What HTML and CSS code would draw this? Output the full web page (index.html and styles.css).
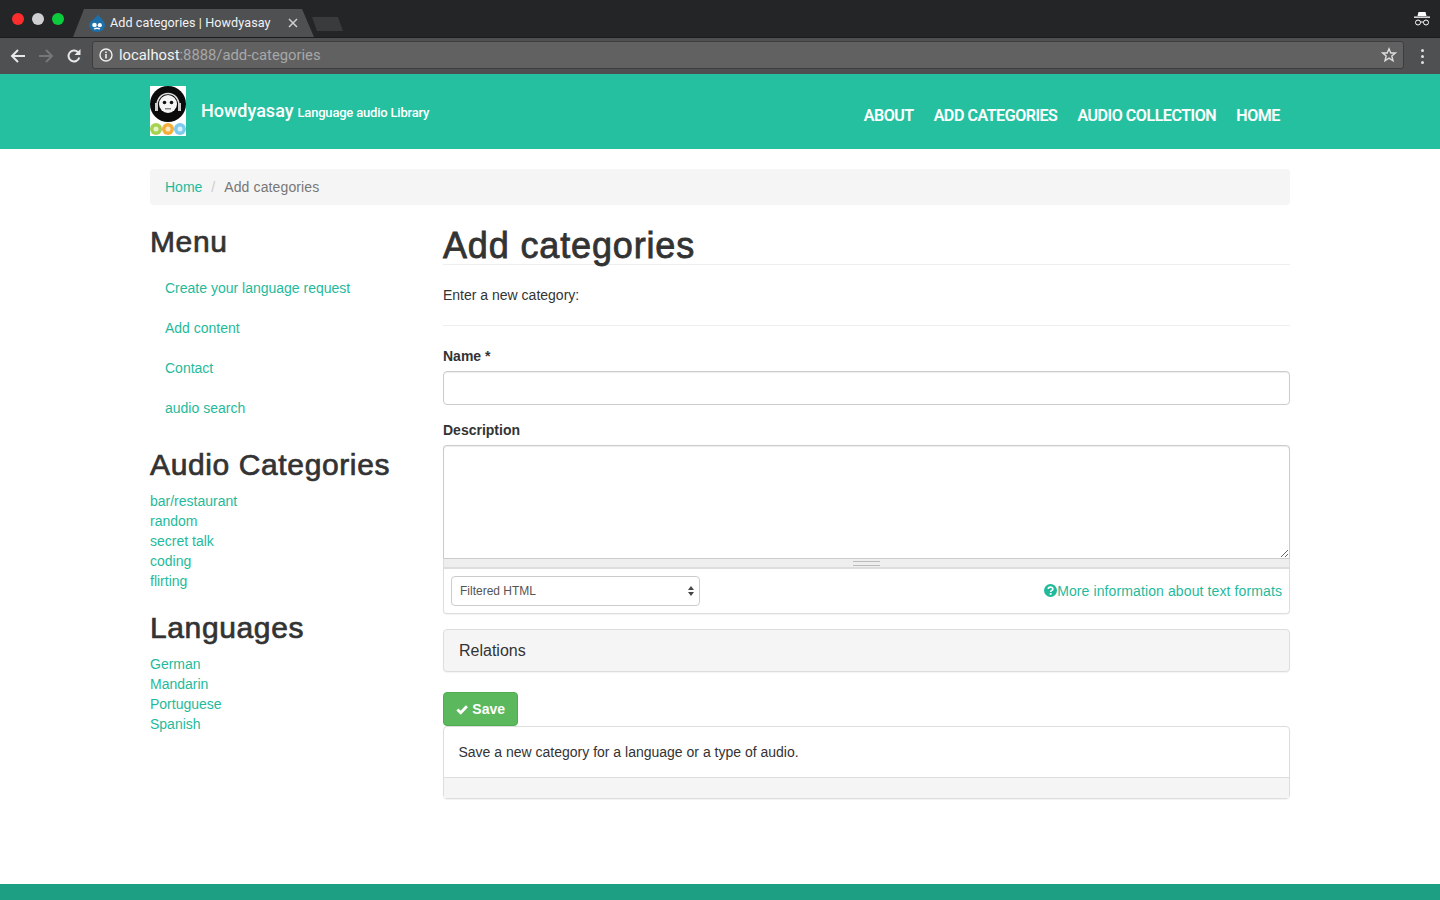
FILE: index.html
```html
<!DOCTYPE html>
<html lang="en">

<head>
    <meta charset="UTF-8">
    <title>Add categories | Howdyasay</title>
    <link rel="stylesheet" href="styles.css">
</head>

<body>
    <!-- browser chrome -->
    <div class="tabstrip">
        <div class="lights">
            <span class="light red"></span>
            <span class="light grey"></span>
            <span class="light green"></span>
        </div>
        <div class="tab">
            <svg class="favicon" width="16" height="18" viewBox="0 0 16 18">
                <path d="M9 0C9.500 3 15.500 5.500 16 11C16 15 12.500 18 8 18C3.500 18 0 15 0 11C0.500 6.500 8 4 9 0Z" fill="#1d6fa8"/>
                <circle cx="5.500" cy="11" r="2.300" fill="#fff"/>
                <circle cx="10.800" cy="11.200" r="2.100" fill="#fff"/>
                <path d="M5 15C7 14 9 14 11 15" stroke="#fff" stroke-width="1.300" fill="none"/>
            </svg>
            <span class="tab-title">Add categories | Howdyasay</span>
            <svg class="tab-close" width="10" height="10" viewBox="0 0 10 10">
                <path d="M1 1L9 9M9 1L1 9" stroke="#d0d0d0" stroke-width="1.500"/>
            </svg>
        </div>
        <div class="newtab"></div>
        <svg class="incognito" width="18" height="18" viewBox="0 0 18 18">
            <path d="M5.500 2H12.500L13.500 6H4.500Z" fill="#fff"/>
            <rect x="1" y="6.500" width="16" height="1.300" fill="#fff"/>
            <circle cx="5" cy="12.500" r="2.500" fill="none" stroke="#fff" stroke-width="1"/>
            <circle cx="13" cy="12.500" r="2.500" fill="none" stroke="#fff" stroke-width="1"/>
            <path d="M7.500 12H10.500" stroke="#fff" stroke-width="1"/>
        </svg>
    </div>
    <div class="toolbar">
        <svg class="tool" width="16" height="16" viewBox="0 0 16 16">
            <path d="M15 8H2M8 2L2 8L8 14" fill="none" stroke="#e8e8e8" stroke-width="2"/>
        </svg>
        <svg class="tool" width="16" height="16" viewBox="0 0 16 16">
            <path d="M1 8H14M8 2L14 8L8 14" fill="none" stroke="#777" stroke-width="2"/>
        </svg>
        <svg class="tool" width="16" height="16" viewBox="0 0 16 16">
            <path d="M13.300 9.500A5.500 5.500 0 1 1 12 4.200" fill="none" stroke="#e8e8e8" stroke-width="2"/>
            <path d="M14.500 1V7H8.500Z" fill="#e8e8e8"/>
        </svg>
        <div class="omnibox">
            <svg width="14" height="14" viewBox="0 0 14 14">
                <circle cx="7" cy="7" r="6" fill="none" stroke="#f0f0f0" stroke-width="1.400"/>
                <rect x="6.200" y="6" width="1.600" height="4.500" fill="#f0f0f0"/>
                <rect x="6.200" y="3.500" width="1.600" height="1.600" fill="#f0f0f0"/>
            </svg>
            <span class="url"><span class="host">localhost</span>:8888/add-categories</span>
            <svg class="star" width="16" height="16" viewBox="0 0 16 16">
                <path d="M8 1.800L9.800 6H14.400L10.800 9L12 13.800L8 11.200L4 13.800L5.200 9L1.600 6H6.200Z" fill="none" stroke="#ddd" stroke-width="1.400"/>
            </svg>
        </div>
        <div class="kebab"><i></i><i></i><i></i></div>
    </div>

    <!-- site -->
    <header class="navbar">
        <div class="container navbar-inner">
            <a class="brand" href="#">
                <svg class="logo" width="36" height="50" viewBox="0 0 36 50">
                    <rect width="36" height="50" fill="#fff"/>
                    <circle cx="18" cy="18" r="18" fill="#0a0a0a"/>
                    <path d="M7 21C6 3 30 3 29 21" fill="none" stroke="#ddd" stroke-width="1.500"/>
                    <rect x="5" y="17" width="3" height="8" fill="#ccc"/>
                    <rect x="28" y="17" width="3" height="8" fill="#ccc"/>
                    <circle cx="18" cy="18" r="9" fill="#f4f4f4"/>
                    <circle cx="14.500" cy="16.500" r="1.800" fill="#111"/>
                    <circle cx="21.500" cy="16.500" r="1.800" fill="#111"/>
                    <rect x="15" y="22" width="6" height="1.500" fill="#888"/>
                    <circle cx="6" cy="43" r="6" fill="#a5d24f"/>
                    <circle cx="18" cy="43" r="6" fill="#f6ae3b"/>
                    <circle cx="30" cy="43" r="6" fill="#7ecbee"/>
                    <circle cx="6" cy="43" r="2.500" fill="#e6f2c8"/>
                    <circle cx="18" cy="43" r="2.500" fill="#fde9c4"/>
                    <circle cx="30" cy="43" r="2.500" fill="#d8f0fa"/>
                </svg>
                <span class="brand-name">Howdyasay</span>
                <span class="brand-slogan">Language audio Library</span>
            </a>
            <nav class="nav">
                <a href="#">ABOUT</a>
                <a href="#">ADD CATEGORIES</a>
                <a href="#">AUDIO COLLECTION</a>
                <a href="#">HOME</a>
            </nav>
        </div>
    </header>

    <div class="container">
        <ol class="breadcrumb">
            <li><a href="#">Home</a></li>
            <li class="sep">/</li>
            <li class="current">Add categories</li>
        </ol>

        <div class="columns">
            <aside class="sidebar">
                <h2 class="menu-title">Menu</h2>
                <ul class="menu">
                    <li><a href="#">Create your language request</a></li>
                    <li><a href="#">Add content</a></li>
                    <li><a href="#">Contact</a></li>
                    <li><a href="#">audio search</a></li>
                </ul>
                <h2 class="block-title">Audio Categories</h2>
                <ul class="list">
                    <li><a href="#">bar/restaurant</a></li>
                    <li><a href="#">random</a></li>
                    <li><a href="#">secret talk</a></li>
                    <li><a href="#">coding</a></li>
                    <li><a href="#">flirting</a></li>
                </ul>
                <h2 class="block-title">Languages</h2>
                <ul class="list">
                    <li><a href="#">German</a></li>
                    <li><a href="#">Mandarin</a></li>
                    <li><a href="#">Portuguese</a></li>
                    <li><a href="#">Spanish</a></li>
                </ul>
            </aside>

            <main class="content">
                <h1 class="page-title">Add categories</h1>
                <p class="intro">Enter a new category:</p>

                <form>
                    <label class="field-label" for="name">Name *</label>
                    <input class="form-control" type="text" id="name">

                    <label class="field-label" for="description">Description</label>
                    <div class="format-box">
                        <textarea class="text-area" id="description"></textarea>
                        <div class="grippie"><span></span></div>
                        <div class="format-row">
                            <div class="fake-select">
                                <span>Filtered HTML</span>
                                <svg width="6" height="10" viewBox="0 0 6 10">
                                    <path d="M3 0L6 4H0Z M3 10L0 6H6Z" fill="#444"/>
                                </svg>
                            </div>
                            <a class="format-help" href="#">
                                <svg width="13" height="13" viewBox="0 0 12 12">
                                    <circle cx="6" cy="6" r="6" fill="#1fba9b"/>
                                    <path d="M3.900 4.600C4 2.400 8.200 2.300 8.200 4.500C8.200 6 6.200 5.900 6.200 7.300" fill="none" stroke="#fff" stroke-width="1.500"/>
                                    <rect x="5.300" y="8.300" width="1.700" height="1.700" fill="#fff"/>
                                </svg>More information about text formats
                            </a>
                        </div>
                    </div>

                    <div class="relations">Relations</div>

                    <button class="btn-save" type="button">
                        <svg width="14" height="11" viewBox="0 0 13 11">
                            <path d="M1.500 5.500L5 9L11.500 2" fill="none" stroke="#fff" stroke-width="3"/>
                        </svg>
                        Save
                    </button>

                    <div class="help-panel">
                        <div class="help-body">Save a new category for a language or a type of audio.</div>
                        <div class="help-foot"></div>
                    </div>
                </form>
            </main>
        </div>
    </div>

    <footer class="footer"></footer>
</body>

</html>
```

FILE: styles.css
```css
* {
    box-sizing: border-box;
}

body {
    margin: 0;
    height: 900px;
    overflow: hidden;
    display: flex;
    flex-direction: column;
    font-family: "Liberation Sans", Arial, sans-serif;
    font-size: 14px;
    line-height: 20px;
    color: #333;
    background-color: #fff;
}

a {
    color: #1fba9b;
    text-decoration: none;
}

ul,
ol {
    list-style: none;
    margin: 0;
    padding: 0;
}

/* browser chrome */
.tabstrip {
    height: 37px;
    flex: none;
    display: flex;
    align-items: flex-end;
    background-color: #242527;
    padding-left: 12px;
    position: relative;
}

.lights {
    display: flex;
    gap: 8px;
    align-self: flex-start;
    margin-top: 13px;
    margin-right: 6px;
}

.light {
    width: 12px;
    height: 12px;
    border-radius: 50%;
}

.red {
    background-color: #fc2d2d;
}

.grey {
    background-color: #d0d0d0;
}

.green {
    background-color: #0ccc3e;
}

.tab {
    width: 241px;
    height: 28px;
    margin-left: 3px;
    padding: 0 8px 0 16px;
    display: flex;
    align-items: center;
    color: #f2f2f2;
    font-family: Roboto, sans-serif;
    font-size: 12.600px;
    letter-spacing: 0.080px;
    background-color: #4f5052;
    clip-path: polygon(0 100%, 11px 0, 229px 0, 100% 100%);
}

.favicon {
    flex: none;
    margin-right: 5px;
}

.tab-title {
    flex: 1;
    white-space: nowrap;
}

.tab-close {
    margin-right: 8px;
}

.newtab {
    width: 31px;
    height: 14px;
    margin: 0 0 6px -2px;
    background-color: #3a3b3d;
    clip-path: polygon(0 0, 26px 0, 100% 100%, 5px 100%);
}

.incognito {
    position: absolute;
    right: 9px;
    top: 10px;
}

.toolbar {
    height: 37px;
    flex: none;
    display: flex;
    align-items: center;
    gap: 12px;
    padding: 0 10px;
    background-color: #4f5052;
    border-top: 1px solid #1c1c1c;
}

.tool {
    flex: none;
}

.omnibox {
    flex: 1;
    height: 28px;
    margin: -2px -2px 0 -2px;
    padding: 0 6px;
    display: flex;
    align-items: center;
    gap: 6px;
    background-color: #616161;
    border: 1px solid #3d3d3d;
    border-radius: 3px;
    font-family: Roboto, sans-serif;
    font-size: 14.800px;
    color: #a8a8a8;
}

.url {
    flex: 1;
}

.host {
    color: #f2f2f2;
}

.kebab {
    width: 16px;
    display: flex;
    flex-direction: column;
    align-items: center;
    gap: 3px;
}

.kebab i {
    width: 3px;
    height: 3px;
    border-radius: 50%;
    background-color: #e0e0e0;
}

/* site */
.container {
    width: 1140px;
    margin-left: auto;
    margin-right: auto;
}

.navbar {
    height: 75px;
    flex: none;
    background-color: #25c0a0;
}

.navbar-inner {
    height: 100%;
    display: flex;
    justify-content: space-between;
}

.brand {
    display: flex;
    align-items: center;
    padding-bottom: 1px;
    color: #fff;
    font-family: Roboto, sans-serif;
    font-weight: 500;
}

.logo {
    margin-right: 15px;
}

.brand-name {
    font-size: 18px;
    margin-right: 4px;
    margin-bottom: 1px;
}

.brand-slogan {
    font-size: 13px;
    letter-spacing: -0.200px;
    margin-top: 3px;
}

.nav {
    display: flex;
    align-items: center;
    gap: 20px;
    padding: 9px 10px 0 0;
}

.nav a {
    color: #fff;
    font-family: Roboto, sans-serif;
    font-size: 16px;
    font-weight: 500;
    letter-spacing: -0.420px;
    -webkit-text-stroke: 0.200px #fff;
}

.breadcrumb {
    display: flex;
    gap: 9px;
    height: 36px;
    margin-top: 20px;
    padding: 8px 15px;
    background-color: #f5f5f5;
    border-radius: 4px;
}

.sep {
    color: #ccc;
}

.current {
    color: #777;
    letter-spacing: 0.120px;
}

.columns {
    display: flex;
    margin-top: 20px;
}

.sidebar {
    width: 293px;
    flex: none;
}

.menu-title,
.block-title {
    margin: 0;
    font-size: 30px;
    line-height: 33px;
    font-weight: 500;
    color: #333;
    letter-spacing: 0.620px;
    -webkit-text-stroke: 0.700px #333;
}

.menu {
    margin-top: 10px;
}

.menu li {
    height: 40px;
    padding: 10px 15px;
}

.block-title {
    margin-top: 20px;
    margin-bottom: 10px;
}

.content {
    flex: 1;
    padding-top: 1px;
}

.page-title {
    margin: 0;
    height: 39px;
    font-size: 36px;
    line-height: 39px;
    font-weight: 500;
    letter-spacing: 0.850px;
    -webkit-text-stroke: 0.800px #333;
    border-bottom: 1px solid #eee;
}

.intro {
    margin: 0;
    padding: 20px 0;
    height: 61px;
    border-bottom: 1px solid #eee;
}

.field-label {
    display: block;
    margin-top: 20px;
    margin-bottom: 5px;
    font-weight: 700;
}

.form-control {
    display: block;
    width: 100%;
    height: 34px;
    border: 1px solid #ccc;
    border-radius: 4px;
    box-shadow: inset 0 1px 1px rgba(0, 0, 0, 0.075);
}

.form-control + .field-label {
    margin-top: 15px;
}

.format-box {
    border: 1px solid #ddd;
    border-top: 0;
    border-radius: 4px;
    box-shadow: 0 1px 1px rgba(0, 0, 0, 0.05);
}

.text-area {
    display: block;
    width: calc(100% + 2px);
    height: 114px;
    margin-left: -1px;
    border: 1px solid #ccc;
    border-radius: 4px 4px 0 0;
    box-shadow: inset 0 1px 1px rgba(0, 0, 0, 0.075);
    resize: vertical;
}

.grippie {
    height: 10px;
    display: flex;
    align-items: center;
    justify-content: center;
    background-color: #eee;
    border-bottom: 2px solid #ddd;
}

.grippie span {
    width: 27px;
    height: 5px;
    border-top: 1px solid #bbb;
    border-bottom: 1px solid #bbb;
}

.format-row {
    height: 44px;
    display: flex;
    align-items: center;
    justify-content: space-between;
    padding: 0 7px;
}

.fake-select {
    width: 249px;
    height: 30px;
    padding: 0 5px 0 8px;
    display: flex;
    align-items: center;
    justify-content: space-between;
    font-size: 12px;
    color: #555;
    border: 1px solid #ccc;
    border-radius: 4px;
}

.format-help {
    letter-spacing: 0.110px;
}

.format-help svg {
    vertical-align: -1px;
}

.relations {
    height: 43px;
    margin-top: 15px;
    padding: 11px 15px;
    font-size: 16px;
    line-height: 20px;
    color: #333;
    background-color: #f5f5f5;
    border: 1px solid #ddd;
    border-radius: 4px;
    box-shadow: 0 1px 1px rgba(0, 0, 0, 0.05);
}

.btn-save {
    display: flex;
    align-items: center;
    gap: 4px;
    height: 34px;
    width: 75px;
    margin-top: 20px;
    padding: 0 12px;
    color: #fff;
    font-family: inherit;
    font-size: 14px;
    font-weight: 700;
    background-color: #5cb85c;
    border: 1px solid #4cae4c;
    border-radius: 4px;
}

.help-panel {
    border: 1px solid #ddd;
    border-radius: 4px;
    box-shadow: 0 1px 1px rgba(0, 0, 0, 0.05);
}

.help-body {
    height: 50px;
    padding: 15px 14.500px;
}

.help-foot {
    height: 21px;
    background-color: #f5f5f5;
    border-top: 1px solid #ddd;
}

.footer {
    height: 16px;
    margin-top: auto;
    flex: none;
    background-color: #1c9f83;
}
```
